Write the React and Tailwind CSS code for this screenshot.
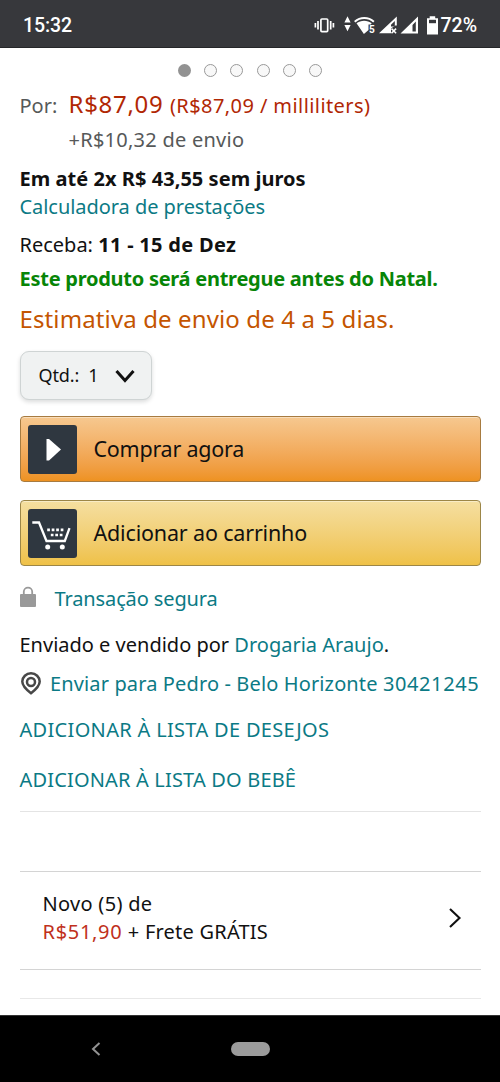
const link = "text-[#0b7a85]";

function StatusBar() {
  return (
    <header className="flex h-12 items-center justify-between border-b border-[#252629] bg-[#37383c] pl-[23px] pr-[23px] font-['Roboto',sans-serif] text-[19.5px] font-medium text-white">
      <span className="mt-1 tracking-[-0.1px]">15:32</span>
      <div className="mt-1 flex items-center">
        <svg width="128" height="26" viewBox="312 12 128 26" fill="none">
          <g stroke="#fff" strokeWidth="1.7">
            <rect x="320.900" y="18" width="6.800" height="12.600" rx="1" />
            <path d="M318 20v8.500M330.700 20v8.500M315.400 22v4.500M333.400 22v4.500" />
          </g>
          <g fill="#fff">
            <path d="M347.500 15.300l3.100 6.200h-6.200zM344.400 24h6.200l-3.100 6.200z" />
            <path d="M356.500 22.300c4.200-3.400 11-3.400 15.200 0l-1 1.200h-2.200v5.500l-4.600 4z" />
            <path d="M396.800 15.500v9h-1.500l-4.300 3v4.700H379z" />
            <path fillRule="evenodd" d="M418 15.500v17H400.500zM415.800 20.500l-3.300 3.400v6.500h3.300z" />
            <path d="M429.700 15.200h5.500v2h2.800v16.300h-11V17.200h2.700z" />
          </g>
          <path d="M354.700 20.700c5.600-4.900 13.600-4.900 19.200 0" stroke="#fff" strokeWidth="2" />
          <path d="M394.800 20v5.500h-3.800v-1.700z" fill="#37383c" />
          <path d="M391.500 27.600l4.600 4.600M396.100 27.600l-4.600 4.600" stroke="#fff" strokeWidth="1.500" />
          <path d="M429 20.500h7" stroke="#37383c" strokeWidth="3.400" />
          <text x="369" y="31.500" fill="#fff" fontSize="10" fontFamily="Roboto" fontWeight="700">5</text>
        </svg>
        <span>72%</span>
      </div>
    </header>
  );
}

function CarouselDots() {
  return (
    <div className="flex h-[39px] items-center justify-center gap-[13.400px] pt-[5px]">
      <span className="size-[13px] rounded-full bg-[#929292]" />
      {[1, 2, 3, 4, 5].map((n) => (
        <span key={n} className="size-[13px] rounded-full border-[1.500px] border-[#999] bg-[#f8f8f8]" />
      ))}
    </div>
  );
}

function PlayIcon() {
  return (
    <svg width="49" height="49" viewBox="0 0 49 49">
      <rect width="49" height="49" rx="3" fill="#2f3740" />
      <path d="M18.500 14h2.500L33 24.500 21 35.500h-2.500z" fill="#fff" />
    </svg>
  );
}

function CartIcon() {
  return (
    <svg width="49" height="49" viewBox="0 0 49 49" fill="none">
      <rect width="49" height="49" rx="3" fill="#2f3740" />
      <path d="M4.300 13.500h6.700l7.500 18.500h18.300l4.700-12.800" stroke="#fff" strokeWidth="2.300" />
      <circle cx="19.700" cy="38" r="2.500" fill="#fff" />
      <circle cx="34.300" cy="38" r="2.500" fill="#fff" />
      <path d="M19.200 20.800h16.200M22.800 26h11.700" stroke="#fff" strokeWidth="2.700" strokeDasharray="2.700 1.800" />
    </svg>
  );
}

function Actions() {
  const base =
    "flex h-[66px] w-full items-center gap-[17px] rounded-[4px] border bg-linear-to-b pl-[7px] text-[21.5px] leading-[28px] shadow-[inset_0_1px_0_rgba(255,255,255,0.4)]";
  return (
    <div className="mt-4 flex flex-col gap-[18px]">
      <button className={`${base} border-[#a77b40] from-[#f6c88f] to-[#ee9220]`}>
        <PlayIcon />
        <span className="-mt-px tracking-[-0.25px]">Comprar agora</span>
      </button>
      <button className={`${base} border-[#9c8647] from-[#f5dfa0] to-[#efc147]`}>
        <CartIcon />
        <span className="-mt-px tracking-[-0.17px]">Adicionar ao carrinho</span>
      </button>
    </div>
  );
}

function Offers() {
  return (
    <section className="mt-[59px] flex h-[99px] items-center justify-between border-y border-[#d4d4d4] pl-[23px] pr-[19px]">
      <div className="-mt-[5px] leading-[28px]">
        <p className="tracking-[0.3px]">Novo (5) de</p>
        <p className="tracking-[0.22px]"><span className="tracking-[0.7px] text-[#c0301c]">R$51,90</span> + Frete GRÁTIS</p>
      </div>
      <svg className="-mt-[5px]" width="14" height="22" viewBox="0 0 14 22" fill="none" stroke="#111" strokeWidth="2.100">
        <path d="M2 2l9.500 9L2 20" />
      </svg>
    </section>
  );
}

export default function App() {
  return (
    <div className="flex h-[1082px] w-[500px] flex-col overflow-hidden bg-white font-['Noto_Sans',sans-serif] text-[20px] text-[#111]">
      <StatusBar />
      <CarouselDots />
      <main className="flex-1 whitespace-nowrap px-[19.500px]">
        <div className="flex h-[34px] items-baseline leading-[34px] text-[#b12704]">
          <span className="w-[49px] text-[#565959]">Por:</span>
          <span className="text-[24px] tracking-[0.7px]">R$87,09</span>
          <span className="ml-[6.500px] tracking-[0.42px]">(R$87,09 / milliliters)</span>
        </div>
        <p className="mt-px pl-[49px] leading-[36px] tracking-[0.25px] text-[#565959]">+R$10,32 de envio</p>
        <p className="mt-[7px] leading-[28px] font-bold tracking-[0.04px]">Em até 2x R$ 43,55 sem juros</p>
        <p className={`leading-[28px] tracking-[-0.05px] ${link}`}>Calculadora de prestações</p>
        <p className="mt-[10px] leading-[28px]">Receba: <b className="tracking-[0.3px]">11 - 15 de Dez</b></p>
        <p className="mt-[6px] leading-[28px] font-bold tracking-[-0.26px] text-[#078507]">Este produto será entregue antes do Natal.</p>
        <p className="mt-2 text-[24px] leading-[36px] tracking-[0.12px] text-[#c45500]">Estimativa de envio de 4 a 5 dias.</p>
        <button className="mt-[14px] flex h-[49px] w-[132px] items-center rounded-[9px] border border-[#cfd4d4] bg-[#f0f2f2] pl-[18px] text-[18px] shadow-[0_2px_4px_rgba(15,17,17,0.15)]">
          <span className="tracking-[-0.1px]">Qtd.:</span>
          <span className="ml-[9px]">1</span>
          <svg className="ml-[16px]" width="20" height="14" viewBox="0 0 20 14" fill="none" stroke="#111" strokeWidth="3">
            <path d="M1.500 2L10 11.500 18.500 2" />
          </svg>
        </button>
        <Actions />
        <div className={`mt-[19px] flex h-[28px] items-center leading-[28px] ${link}`}>
          <svg className="mr-[19px] -mt-[4px]" width="16" height="22" viewBox="0 0 16 22" fill="none">
            <path d="M3.800 10V5.800a4.200 4.200 0 018.400 0V10" stroke="#999" strokeWidth="1.800" />
            <rect y="8" width="16" height="13" rx="1" fill="#999" />
          </svg>
          <span className="tracking-[-0.12px]">Transação segura</span>
        </div>
        <p className="mt-[18px] leading-[28px]">Enviado e vendido por <span className={link}>Drogaria Araujo</span>.</p>
        <div className={`mt-[11px] flex h-[28px] items-center leading-[28px] ${link}`}>
          <svg className="ml-px mr-[9.500px] -mt-[2px]" width="20" height="23" viewBox="0 0 20 23" fill="none" stroke="#484848" strokeWidth="2.500">
            <path d="M10 21.300C5 17.500 1.300 14 1.300 9.600a8.700 8.300 0 0117.400 0C18.700 14 15 17.500 10 21.300z" />
            <circle cx="10" cy="10" r="4" />
          </svg>
          <span className="tracking-[0.13px]">Enviar para Pedro - Belo Horizonte <span className="tracking-[0.6px]">30421245</span></span>
        </div>
        <p className={`mt-[18px] leading-[28px] tracking-[0.32px] ${link}`}>ADICIONAR À LISTA DE DESEJOS</p>
        <p className={`mt-[22px] leading-[28px] tracking-[0.17px] ${link}`}>ADICIONAR À LISTA DO BEBÊ</p>
        <hr className="mt-[17px] border-[#e4e4e4]" />
        <Offers />
        <hr className="mt-[28px] border-[#e8e8e8]" />
      </main>
      <nav className="flex h-[67px] items-center border-t border-[#333] bg-black">
        <svg className="ml-[91px]" width="10" height="14" viewBox="0 0 10 14" fill="none" stroke="#929292" strokeWidth="2">
          <path d="M8.500 1L2 7l6.500 6" />
        </svg>
        <span className="ml-[129.500px] h-[14px] w-[39px] rounded-full bg-[#9b9b9b]" />
      </nav>
    </div>
  );
}
